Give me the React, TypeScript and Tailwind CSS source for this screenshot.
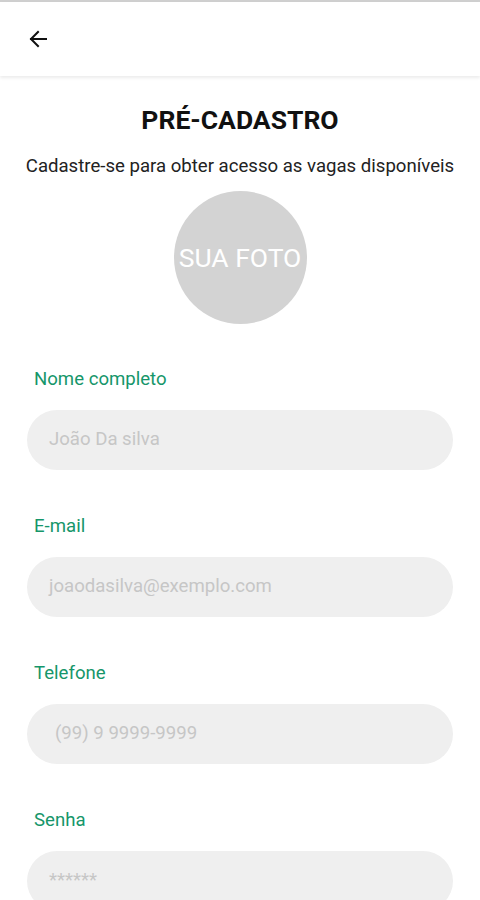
import React from "react";

function Field({ label, placeholder, pl = "pl-[22px]" }: { label: string; placeholder: string; pl?: string }) {
  return (
    <div className="flex flex-col">
      <div className="pl-[34px] text-[18.6px] leading-[18px] text-[#16966a]">{label}</div>
      <div className={`mx-[27px] mt-[22px] flex h-[60px] items-center rounded-full bg-[#efefef] ${pl}`}>
        <span className="text-[18.6px] text-[#c6c6c6]">{placeholder}</span>
      </div>
    </div>
  );
}

export default function App() {
  return (
    <div className="min-h-[900px] w-[480px] overflow-hidden bg-white" style={{ fontFamily: "Roboto, 'Noto Sans', sans-serif" }}>
      <div className="h-[2px] bg-[#cfcfcf]" />
      <div className="flex h-[74px] items-center bg-white pl-[26px] shadow-[0_2px_3px_rgba(0,0,0,0.08)]">
        <svg width="24" height="24" viewBox="0 0 24 24" fill="none" stroke="#111" strokeWidth="2" strokeLinecap="square">
          <path d="M20 12H5" />
          <path d="M12 5l-7 7 7 7" />
        </svg>
      </div>
      <div className="flex flex-col items-center pt-[29px]">
        <h1 className="text-[26.5px] font-bold leading-[30px] text-[#111]">PRÉ-CADASTRO</h1>
        <p className="mt-[20px] text-[18.6px] leading-[22px] text-[#222]">Cadastre-se para obter acesso as vagas disponíveis</p>
        <div className="mt-[14px] flex h-[133px] w-[133px] items-center justify-center rounded-full bg-[#d3d3d3]">
          <span className="text-[26.5px] text-white">SUA FOTO</span>
        </div>
      </div>
      <div className="mt-[46px] flex flex-col gap-[47px]">
        <Field label="Nome completo" placeholder="João Da silva" />
        <Field label="E-mail" placeholder="joaodasilva@exemplo.com" />
        <Field label="Telefone" placeholder="(99) 9 9999-9999" pl="pl-[28px]" />
        <Field label="Senha" placeholder="******" />
      </div>
    </div>
  );
}
